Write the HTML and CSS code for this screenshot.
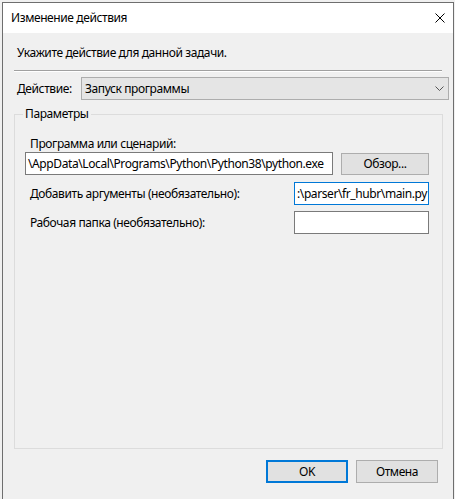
FILE: index.html
```html
<!DOCTYPE html>
<html lang="ru">
<head>
    <meta charset="UTF-8">
    <meta name="viewport" content="width=device-width, initial-scale=1.0">
    <title>Изменение действия</title>
    <link rel="stylesheet" href="styles.css">
</head>
<body>
    <div class="window">
        <div class="titlebar">
            <span class="title">Изменение действия</span>
            <button class="close" aria-label="Закрыть">
                <svg width="10" height="10" viewBox="0 0 10 10">
                    <path d="M0.5 0.5 L9.5 9.5 M9.5 0.5 L0.5 9.5" stroke="#000" stroke-width="1" fill="none"/>
                </svg>
            </button>
        </div>

        <div class="content">
            <p class="prompt">Укажите действие для данной задачи.</p>
            <div class="separator"></div>

            <div class="action-row">
                <label class="action-label">Действие:</label>
                <div class="select">
                    <span>Запуск программы</span>
                    <svg width="9" height="5" viewBox="0 0 9 5">
                        <path d="M0.5 0.5 L4.5 4.5 L8.5 0.5" stroke="#555" stroke-width="1" fill="none"/>
                    </svg>
                </div>
            </div>

            <fieldset class="group">
                <legend>Параметры</legend>
                <div class="group-body">
                    <div class="field-label">Программа или сценарий:</div>
                    <div class="row">
                        <div class="field field-wide"><span>\AppData\Local\Programs\Python\Python38\python.exe</span></div>
                        <button class="btn btn-browse">Обзор...</button>
                    </div>
                    <div class="row row-args">
                        <div class="row-label">Добавить аргументы (необязательно):</div>
                        <div class="field field-short focused"><span>:\parser\fr_hubr\main.py</span></div>
                    </div>
                    <div class="row row-dir">
                        <div class="row-label">Рабочая папка (необязательно):</div>
                        <div class="field field-short"></div>
                    </div>
                </div>
            </fieldset>

            <div class="footer">
                <button class="btn btn-ok">OK</button>
                <button class="btn">Отмена</button>
            </div>
        </div>
    </div>
</body>
</html>
```

FILE: styles.css
```css
html, body {
    margin: 0;
    padding: 0;
    background-color: #f0f0f0;
    font-family: "Noto Sans", "Liberation Sans", sans-serif;
    font-size: 12px;
    line-height: 16px;
    letter-spacing: -0.4px;
    color: #000;
}

.window {
    margin: 2px 0 0 2px;
    width: 450px;
    height: 520px;
    border: 1px solid #6e6e6e;
    border-bottom: none;
    background-color: #f0f0f0;
}

.titlebar {
    height: 30px;
    background-color: #fff;
    display: flex;
    align-items: center;
    justify-content: space-between;
    padding-left: 8px;
}

.close {
    width: 26px;
    height: 30px;
    border: none;
    background: transparent;
    display: flex;
    align-items: center;
    justify-content: center;
    padding: 0;
}

.prompt {
    margin: 12px 0 0 14px;
}

.separator {
    height: 1px;
    background-color: #a0a0a0;
    border-bottom: 1px solid #fff;
    margin: 9px 11px 0 11px;
}

.action-row {
    display: flex;
    align-items: center;
    margin-top: 5px;
}

.action-label {
    width: 64px;
    padding-left: 14px;
}

.select {
    flex: 1;
    height: 21px;
    margin-right: 4px;
    border: 1px solid #adadad;
    background-color: #e5e5e5;
    display: flex;
    align-items: center;
    justify-content: space-between;
    padding: 0 4px 0 3px;
}

.group {
    margin: 6px 10px 0 11px;
    padding: 0;
    border: 1px solid #dcdcdc;
    min-width: 0;
}

.group legend {
    margin-left: 8px;
    padding: 0 2px;
}

.group-body {
    height: 326px;
    overflow: hidden;
}

.field-label {
    margin: 14px 0 0 15px;
}

.row {
    display: flex;
    align-items: center;
}

.row:first-of-type {
    margin-top: 4px;
}

.row-args {
    margin-top: 7px;
}

.row-dir {
    margin-top: 6px;
}

.row-label {
    width: 264px;
    padding-left: 15px;
}

.field {
    height: 21px;
    border: 1px solid #7a7a7a;
    background-color: #fff;
    display: flex;
    align-items: center;
    justify-content: flex-start;
    overflow: hidden;
    white-space: nowrap;
    padding: 0 2px;
}

.field-wide {
    width: 302px;
    margin-left: 10px;
}

.field-short {
    width: 129px;
}

.focused {
    border-color: #0078d7;
}

.btn {
    font-family: inherit;
    font-size: 12px;
    letter-spacing: inherit;
    height: 23px;
    width: 82px;
    border: 1px solid #adadad;
    background-color: #e1e1e1;
    color: #000;
    padding: 0;
}

.btn-browse {
    width: 88px;
    height: 22px;
    margin-left: 8px;
}

.btn-ok {
    border: 2px solid #0078d7;
}

.footer {
    display: flex;
    justify-content: flex-end;
    gap: 8px;
    margin-top: 11px;
    padding-right: 15px;
}
```
